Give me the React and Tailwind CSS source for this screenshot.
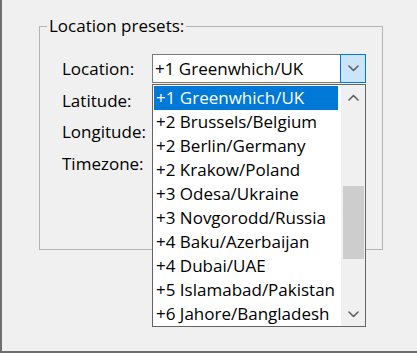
import React from 'react';

const PRESETS = [
  '+1 Greenwhich/UK',
  '+2 Brussels/Belgium',
  '+2 Berlin/Germany',
  '+2 Krakow/Poland',
  '+3 Odesa/Ukraine',
  '+3 Novgorodd/Russia',
  '+4 Baku/Azerbaijan',
  '+4 Dubai/UAE',
  '+5 Islamabad/Pakistan',
  '+6 Jahore/Bangladesh',
];

const LABELS = ['Location:', 'Latitude:', 'Longitude:', 'Timezone:'];

function Chevron({ up = false, color = '#606060' }) {
  return (
    <svg width="11" height="7" viewBox="0 0 11 7" fill="none" aria-hidden="true">
      <path
        d={up ? 'M1 6 5.5 1.5 10 6' : 'M1 1 5.5 5.5 10 1'}
        stroke={color}
        strokeWidth="1.6"
        strokeLinecap="round"
        strokeLinejoin="round"
      />
    </svg>
  );
}

export default function App() {
  const selected = 0;

  return (
    <div
      className="relative h-[353px] w-[417px] overflow-hidden border-b-2 border-l-2 border-[#6e6e6e] bg-[#f0f0f0] text-[17px] text-black"
      style={{ fontFamily: '"Open Sans", "Noto Sans", sans-serif' }}
    >
      <fieldset className="ml-[37px] mt-[16px] h-[234px] w-[344px] border border-[#b4b4b4] p-0">
        <legend className="ml-[7px] h-[20px] px-[2px] leading-[20px]">Location presets:</legend>

        <div className="mt-[17px] flex pl-[22px]">
          <div className="flex w-[90px] flex-col">
            {LABELS.map((label) => (
              <div key={label} className="flex h-[31.5px] items-center">
                {label}
              </div>
            ))}
          </div>

          <div className="mt-[1px] flex h-[29px] w-[214px] border border-[#7a7a7a] bg-white">
            <div className="flex flex-1 items-center pl-[2px]">{PRESETS[selected]}</div>
            <div className="-my-px -mr-px flex w-[26px] items-center justify-center border border-[#0078d7] bg-[#cce4f7]">
              <Chevron />
            </div>
          </div>
        </div>
      </fieldset>

      <div className="absolute left-[150px] top-[84px] flex h-[243px] w-[214px] border border-[#646464] bg-white">
        <ul className="flex flex-1 flex-col py-[1px] pl-[1px] pr-[3px]">
          {PRESETS.map((name, i) => (
            <li
              key={name}
              className={
                i === selected
                  ? 'flex h-[24px] items-center bg-[#0078d7] pl-[2px] text-white'
                  : 'flex h-[24px] items-center pl-[2px]'
              }
            >
              {name}
            </li>
          ))}
        </ul>
        <div className="flex w-[24px] flex-col items-center bg-[#f0f0f0]">
          <div className="flex h-[24px] w-full items-center justify-center">
            <Chevron up />
          </div>
          <div className="mt-[77px] h-[73px] w-[21px] bg-[#cdcdcd]" />
          <div className="flex-1" />
          <div className="flex h-[24px] w-full items-center justify-center">
            <Chevron />
          </div>
        </div>
      </div>
    </div>
  );
}
